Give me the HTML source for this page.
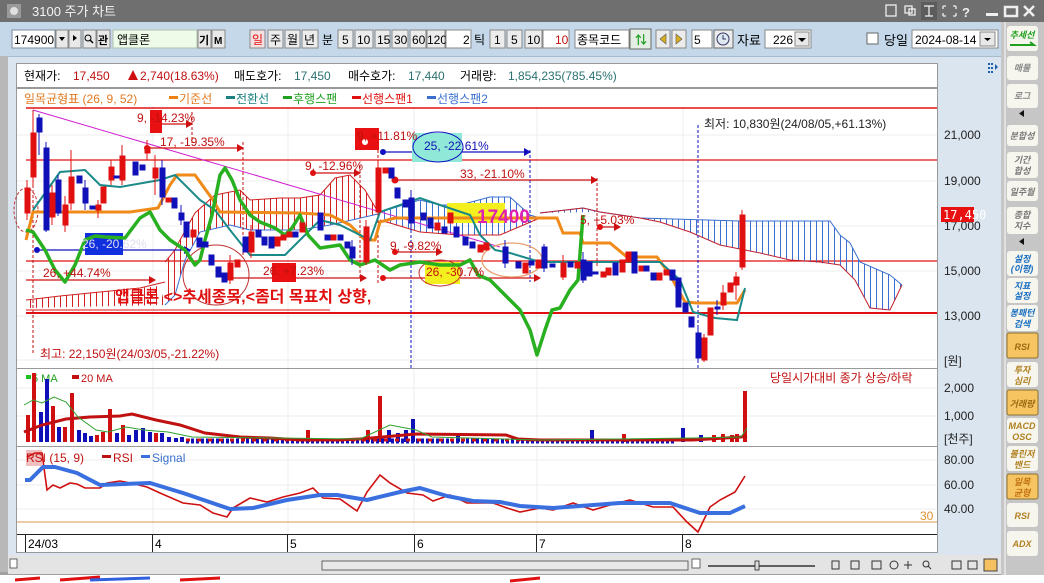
<!DOCTYPE html>
<html><head><meta charset="utf-8">
<style>
html,body{margin:0;padding:0;width:1044px;height:583px;overflow:hidden;background:#fff}
svg{display:block}
text{font-family:"Liberation Sans","Noto Sans CJK KR",sans-serif}
.k{font-family:"Liberation Sans","Noto Sans CJK KR",sans-serif}
.m{font-family:"DejaVu Sans Mono","Liberation Mono","Noto Sans CJK KR",monospace}
</style></head><body>
<svg width="1044" height="583" viewBox="0 0 1044 583" xmlns="http://www.w3.org/2000/svg">
<defs>
<pattern id="hr" patternUnits="userSpaceOnUse" width="6" height="10"><line x1="0.5" y1="0" x2="0.5" y2="10" stroke="#d02020" stroke-width="1"/></pattern>
<pattern id="hb" patternUnits="userSpaceOnUse" width="6" height="10"><line x1="0.5" y1="0" x2="0.5" y2="10" stroke="#3a6fd0" stroke-width="1"/></pattern>
</defs>
<!-- bottom strip -->
<rect x="0" y="574" width="1044" height="9" fill="#fff"/>
<path d="M15 580 L40 578 M60 580 L100 577 M180 580 L220 578 M510 581 L540 578" stroke="#e01010" stroke-width="3"/>
<path d="M90 580 L150 578" stroke="#3060e0" stroke-width="3"/>
<!-- window bg -->
<rect x="0" y="0" width="1044" height="575" fill="#dbe5ef"/>
<rect x="0" y="0" width="8" height="575" fill="#b8b8b8"/>
<rect x="0" y="572" width="1004" height="3" fill="#a0a0a0"/>
<!-- title bar -->
<rect x="0" y="0" width="1044" height="22" fill="#6f6f6f"/>
<rect x="7" y="4" width="14" height="14" fill="#9a9a9a"/><circle cx="14" cy="11" r="4" fill="#e0e0e0"/>
<text x="32" y="16" font-size="13" fill="#f4f4f4">3100 주가 차트</text>
<g fill="none" stroke="#eee" stroke-width="1.3">
<rect x="886" y="5" width="10" height="11"/><rect x="905" y="6" width="7" height="7"/><rect x="909" y="9" width="6" height="6"/>
<rect x="921" y="2" width="16" height="18" fill="#5c5c5c" stroke="none"/>
<path d="M924 6h10M929 6v10M925 16h8M943 6h3M943 6v3M956 6h-3M956 6v3M943 16h3M943 16v-3M956 16h-3M956 16v-3"/>
</g>
<text x="962" y="17" font-size="13" fill="#eee" font-weight="bold">?</text>
<rect x="986" y="13" width="12" height="3" fill="#eee"/>
<rect x="1005" y="7" width="12" height="9" fill="none" stroke="#eee" stroke-width="2.5"/>
<path d="M1024 6l10 10M1034 6l-10 10" stroke="#eee" stroke-width="2.5"/>
<!-- toolbar -->
<rect x="0" y="22" width="1004" height="34" fill="#c4d8e9"/>
<rect x="8" y="56" width="996" height="1" fill="#a9bccd"/>
<g font-size="12" class="k">
<rect x="12" y="30" width="43" height="18" fill="#fff" stroke="#7a8a9a"/><text x="14" y="44">174900</text>
<g fill="#e8e8e8" stroke="#888"><rect x="56" y="30" width="12" height="18"/><rect x="69" y="30" width="12" height="18"/><rect x="83" y="30" width="13" height="18"/><rect x="97" y="30" width="13" height="18"/><rect x="198" y="30" width="13" height="18"/><rect x="212" y="30" width="13" height="18"/></g>
<path d="M59 37h6l-3 4z M73 35v6l4-3z" fill="#000"/>
<circle cx="88" cy="38" r="3" fill="none" stroke="#000"/><path d="M90 40l3 3" stroke="#000" stroke-width="1.5"/>
<text x="98" y="44" font-size="11" font-weight="bold">관</text>
<rect x="113" y="30" width="84" height="18" fill="#eefbe8" stroke="#b0c0b0"/><text x="117" y="44">앱클론</text>
<text x="199" y="44" font-weight="bold" font-size="11">기</text><text x="214" y="44" font-weight="bold" font-size="10">M</text>
<g fill="#ececec" stroke="#888">
<rect x="250" y="30" width="15" height="18" fill="#f4e0e0"/><rect x="268" y="30" width="15" height="18"/><rect x="285" y="30" width="15" height="18"/><rect x="302" y="30" width="16" height="18"/>
<rect x="338" y="30" width="15" height="18"/><rect x="355" y="30" width="18" height="18"/><rect x="375" y="30" width="15" height="18"/><rect x="392" y="30" width="16" height="18"/><rect x="410" y="30" width="16" height="18"/><rect x="427" y="30" width="18" height="18"/>
<rect x="490" y="30" width="15" height="18"/><rect x="507" y="30" width="15" height="18"/><rect x="525" y="30" width="17" height="18"/>
</g>
<text x="252" y="44" fill="#e01010">일</text><text x="270" y="44">주</text><text x="287" y="44">월</text><text x="304" y="44">년</text><text x="322" y="44">분</text>
<text x="342" y="44">5</text><text x="357" y="44">10</text><text x="377" y="44">15</text><text x="394" y="44">30</text><text x="412" y="44">60</text><text x="427" y="44">120</text>
<rect x="446" y="30" width="25" height="18" fill="#fff" stroke="#888"/><text x="463" y="44">2</text><text x="474" y="44">틱</text>
<text x="494" y="44">1</text><text x="511" y="44">5</text><text x="527" y="44">10</text>
<rect x="543" y="30" width="26" height="18" fill="#fff" stroke="#888"/><text x="555" y="44" fill="#c01010">10</text>
<rect x="575" y="30" width="54" height="18" fill="#fff" stroke="#888"/><text x="577" y="44">종목코드</text>
<rect x="630" y="29" width="21" height="20" fill="#e4eee4" stroke="#666"/><text x="635" y="44" fill="#20a020" font-weight="bold">⇅</text>
<rect x="656" y="30" width="14" height="18" fill="#ececec" stroke="#888"/><rect x="672" y="30" width="14" height="18" fill="#ececec" stroke="#888"/>
<path d="M666 34v10l-6-5z M676 34v10l6-5z" fill="#d8b020" stroke="#555" stroke-width="0.6"/>
<rect x="692" y="30" width="20" height="18" fill="#fff" stroke="#888"/><text x="694" y="44">5</text>
<rect x="714" y="30" width="19" height="18" fill="#ececec" stroke="#666"/><circle cx="723" cy="39" r="6" fill="#dde8f0" stroke="#336"/><path d="M723 35v4h3" stroke="#336" fill="none"/>
<text x="737" y="45" font-size="13">자료</text>
<rect x="765" y="30" width="46" height="18" fill="#fff" stroke="#888"/><text x="773" y="44">226</text><rect x="795" y="32" width="14" height="14" fill="#e8e8e8" stroke="#888"/><path d="M798 38h8l-4 4z"/>
<rect x="867" y="33" width="11" height="11" fill="#fff" stroke="#666"/><text x="884" y="45" font-size="13">당일</text>
<rect x="912" y="30" width="86" height="18" fill="#fff" stroke="#888"/><text x="915" y="44">2024-08-14</text><rect x="980" y="32" width="15" height="14" fill="#e8e8e8" stroke="#888"/><path d="M984 38h7l-3.5 3z"/>
</g>
<!-- right sidebar -->
<rect x="1001" y="22" width="43" height="553" fill="#c6c6c6"/>
<rect x="1004" y="22" width="2" height="553" fill="#e0e0e0"/>
<g font-size="9" font-style="italic" font-weight="bold" text-anchor="middle" class="k">
<rect x="1007" y="26" width="31" height="25" rx="3" fill="#f7f6ee"/><text x="1022" y="38" fill="#20a020">추세선</text><path d="M1010 45h24l-4 -3" stroke="#20a020" stroke-width="2" fill="none"/>
<rect x="1007" y="56" width="31" height="24" rx="3" fill="#f7f6ee"/><text x="1022" y="71" fill="#888">매물</text>
<rect x="1007" y="84" width="31" height="24" rx="3" fill="#f7f6ee"/><text x="1022" y="99" fill="#888">로그</text>
<path d="M1024 110v7l-5-3.5z" fill="#111"/>
<rect x="1007" y="125" width="31" height="21" rx="3" fill="#f7f6ee"/><text x="1022" y="139" fill="#777">분합성</text>
<rect x="1007" y="152" width="31" height="26" rx="3" fill="#f7f6ee"/><text x="1022" y="163" fill="#777">기간</text><text x="1022" y="174" fill="#777">합성</text>
<rect x="1007" y="181" width="31" height="20" rx="3" fill="#f7f6ee"/><text x="1022" y="195" fill="#777">일주월</text>
<rect x="1007" y="207" width="31" height="27" rx="3" fill="#f7f6ee"/><text x="1022" y="218" fill="#777">종합</text><text x="1022" y="229" fill="#777">지수</text>
<path d="M1024 238v7l-5-3.5z" fill="#111"/>
<rect x="1007" y="251" width="31" height="25" rx="3" fill="#f7f6ee"/><text x="1022" y="262" fill="#1a6fc0">설정</text><text x="1022" y="272" fill="#1a6fc0">(이평)</text>
<rect x="1007" y="278" width="31" height="25" rx="3" fill="#f7f6ee"/><text x="1022" y="289" fill="#1a6fc0">지표</text><text x="1022" y="299" fill="#1a6fc0">설정</text>
<rect x="1007" y="305" width="31" height="26" rx="3" fill="#f7f6ee"/><text x="1022" y="316" fill="#1a6fc0">봉패턴</text><text x="1022" y="327" fill="#1a6fc0">검색</text>
<rect x="1007" y="333" width="31" height="25" rx="2" fill="#f7c462" stroke="#8a7030"/><text x="1022" y="350" fill="#9a6a10">RSI</text>
<rect x="1007" y="362" width="31" height="25" rx="3" fill="#f7f6ee"/><text x="1022" y="373" fill="#b08020">투자</text><text x="1022" y="384" fill="#b08020">심리</text>
<rect x="1007" y="390" width="31" height="25" rx="2" fill="#f7c462" stroke="#8a7030"/><text x="1022" y="407" fill="#9a6a10">거래량</text>
<rect x="1007" y="418" width="31" height="25" rx="3" fill="#f7f6ee"/><text x="1022" y="429" fill="#b08020">MACD</text><text x="1022" y="440" fill="#b08020">OSC</text>
<rect x="1007" y="446" width="31" height="25" rx="3" fill="#f7f6ee"/><text x="1022" y="457" fill="#b08020">볼린저</text><text x="1022" y="468" fill="#b08020">밴드</text>
<rect x="1007" y="474" width="31" height="25" rx="2" fill="#f7c462" stroke="#8a7030"/><text x="1022" y="485" fill="#c07010">일목</text><text x="1022" y="496" fill="#c07010">균형</text>
<rect x="1007" y="503" width="31" height="24" rx="3" fill="#f7f6ee"/><text x="1022" y="519" fill="#b08020">RSI</text>
<rect x="1007" y="531" width="31" height="25" rx="3" fill="#f7f6ee"/><text x="1022" y="547" fill="#b08020">ADX</text>
</g>
<!-- info row -->
<rect x="16.5" y="63.5" width="921" height="24" fill="#fff" stroke="#999"/>
<g font-size="12" class="m">
<text x="24" y="80">현재가:</text><text x="73" y="80" fill="#c01010">17,450</text>
<path d="M128 80l5-10 5 10z" fill="#d01010"/><text x="140" y="80" fill="#c01010">2,740(18.63%)</text>
<text x="234" y="80">매도호가:</text><text x="294" y="80" fill="#2a7070">17,450</text>
<text x="348" y="80">매수호가:</text><text x="408" y="80" fill="#2a7070">17,440</text>
<text x="460" y="80">거래량:</text><text x="508" y="80" fill="#2a7070">1,854,235(785.45%)</text>
</g>
<g fill="#1a5fb0"><rect x="988" y="63" width="2" height="2"/><rect x="988" y="67" width="2" height="2"/><rect x="988" y="71" width="2" height="2"/><rect x="991" y="63" width="2" height="2"/><rect x="991" y="67" width="2" height="2"/><rect x="991" y="71" width="2" height="2"/><path d="M995 64v6l3-3z"/></g>
<!-- chart panel -->
<rect x="16.5" y="88.5" width="921" height="464" fill="#fff" stroke="#999"/>
<!-- grids -->
<g stroke="#ececec" stroke-width="1">
<path d="M153 106V534M288 106V534M414 106V534M537 106V534M683 106V534"/>
<path d="M17 135H937M17 181H937M17 226H937M17 271H937M17 316H937M17 360H937M17 388H937M17 416H937M17 460H937M17 485H937M17 509H937"/>
</g>
<line x1="17" y1="368.5" x2="937" y2="368.5" stroke="#999"/>
<line x1="17" y1="446.5" x2="937" y2="446.5" stroke="#999"/>
<!-- legend -->
<g font-size="12" class="m">
<text x="24" y="103" fill="#e07820">일목균형표 (26, 9, 52)</text>
<rect x="169" y="96" width="9" height="3" fill="#f08010"/><text x="179" y="103" fill="#e07820">기준선</text>
<rect x="226" y="96" width="9" height="3" fill="#1a8080"/><text x="236" y="103" fill="#1a8080">전환선</text>
<rect x="283" y="96" width="9" height="3" fill="#20a020"/><text x="293" y="103" fill="#20a020">후행스팬</text>
<rect x="352" y="96" width="9" height="3" fill="#e01010"/><text x="362" y="103" fill="#e01010">선행스팬1</text>
<rect x="427" y="96" width="9" height="3" fill="#3a6fd0"/><text x="437" y="103" fill="#3a6fd0">선행스팬2</text>
</g>
<!-- horizontal red lines -->
<g stroke="#e01010">
<line x1="26" y1="108" x2="937" y2="108" stroke-width="1.5"/>
<line x1="26" y1="160" x2="937" y2="160" stroke-width="1.2"/>
<line x1="26" y1="261" x2="937" y2="261" stroke-width="1.2"/>
<line x1="26" y1="313" x2="937" y2="313" stroke-width="2"/>
<line x1="26" y1="310" x2="330" y2="310" stroke-width="1"/>
</g>
<!-- clouds -->
<polygon points="165,262 175,250 180,240 195,213 215,195 240,190 250,200 280,198 300,198 320,195 335,178 350,175 365,190 378,212 375,215 330,225 300,230 250,230 230,225 200,232 185,260 175,295 165,305" fill="url(#hr)"/>
<polyline points="165,262 175,250 180,240 195,213 215,195 240,190 250,200 280,198 300,198 320,195 335,178 350,175 365,190 378,212" fill="none" stroke="#d02020"/>
<polyline points="165,305 175,295 185,260 200,232 230,225 250,230 300,230 330,225 378,214" fill="none" stroke="#3a6fd0"/>
<polygon points="26,300 60,296 100,292 140,288 160,286 165,305 26,308" fill="url(#hr)"/>
<polyline points="26,300 60,296 100,292 140,288 165,282" fill="none" stroke="#d02020"/>
<polygon points="380,212 420,200 440,205 460,205 490,197 510,197 530,215 540,218 500,235 460,235 420,232 380,220" fill="url(#hb)"/>
<polyline points="380,212 420,200 440,205 460,205 490,197 510,197 530,215 540,218" fill="none" stroke="#3a6fd0"/>
<polyline points="380,220 420,232 460,235 500,235 540,218" fill="none" stroke="#d02020"/>
<polygon points="540,213 583,208 600,212 640,218 740,221 830,221 840,235 850,243 860,262 890,275 902,285 890,310 870,308 855,280 840,265 790,260 760,253 720,245 690,232 660,222 640,218 600,212" fill="url(#hb)"/>
<polyline points="540,213 583,208 600,212 640,218 740,221 830,221 840,235 850,243 860,262 890,275 902,285" fill="none" stroke="#3a6fd0"/>
<polyline points="540,213 583,208 600,212 640,218 660,222 690,232 720,245 760,253 790,260 820,262 840,265 855,280 870,308 890,310 902,285" fill="none" stroke="#c02030"/>
<!-- trend line -->
<line x1="33" y1="110" x2="500" y2="247" stroke="#d020d0"/>
<!-- dashed verticals -->
<g stroke-dasharray="3,2" fill="none">
<line x1="33" y1="110" x2="33" y2="355" stroke="#c01010"/>
<line x1="192" y1="112" x2="192" y2="143" stroke="#c01010"/>
<line x1="243" y1="142" x2="243" y2="255" stroke="#c01010"/>
<line x1="360" y1="165" x2="360" y2="280" stroke="#c01010"/>
<line x1="378" y1="140" x2="378" y2="285" stroke="#c01010"/>
<line x1="411" y1="200" x2="411" y2="368" stroke="#1010c0"/>
<line x1="530" y1="150" x2="530" y2="282" stroke="#1010c0"/>
<line x1="597" y1="178" x2="597" y2="268" stroke="#c01010"/>
<line x1="698" y1="125" x2="698" y2="368" stroke="#1010c0"/>
</g>
<!-- annotation lines -->
<g stroke-width="1.2">
<line x1="147" y1="148" x2="243" y2="148" stroke="#d01010"/><path d="M237 144l7 4-7 4z" fill="#d01010"/><circle cx="147" cy="148" r="3" fill="#e01010"/>
<line x1="150" y1="124" x2="192" y2="124" stroke="#d01010"/><path d="M186 120l7 4-7 4z" fill="#d01010"/>
<line x1="313" y1="173" x2="360" y2="173" stroke="#d01010"/><circle cx="313" cy="173" r="3" fill="#e01010"/><path d="M354 169l7 4-7 4z" fill="#d01010"/>
<line x1="383" y1="152" x2="530" y2="152" stroke="#1010c0"/><circle cx="383" cy="152" r="3" fill="#1010c0"/><path d="M524 148l7 4-7 4z" fill="#1010c0"/>
<line x1="395" y1="180" x2="597" y2="180" stroke="#d01010"/><circle cx="395" cy="180" r="3.5" fill="#e01010"/><path d="M591 176l7 4-7 4z" fill="#d01010"/>
<line x1="36" y1="250" x2="190" y2="250" stroke="#1010c0"/><circle cx="37" cy="250" r="3" fill="#1010c0"/><path d="M184 246l7 4-7 4z" fill="#1010c0"/>
<line x1="26" y1="280" x2="155" y2="280" stroke="#d01010"/><path d="M149 276l7 4-7 4z" fill="#d01010"/>
<line x1="230" y1="278" x2="366" y2="278" stroke="#d01010"/><path d="M360 274l7 4-7 4z" fill="#d01010"/>
<line x1="395" y1="252" x2="442" y2="252" stroke="#d01010"/><circle cx="395" cy="252" r="3" fill="#e01010"/><path d="M436 248l7 4-7 4z" fill="#d01010"/>
<line x1="383" y1="278" x2="540" y2="278" stroke="#d01010"/><circle cx="383" cy="278" r="3" fill="#e01010"/><path d="M534 274l7 4-7 4z" fill="#d01010"/>
<line x1="600" y1="227" x2="620" y2="227" stroke="#d01010"/><circle cx="600" cy="227" r="3" fill="#e01010"/><path d="M614 223l7 4-7 4z" fill="#d01010"/>
</g>
<!-- boxes & ellipses -->
<rect x="150" y="110" width="12" height="23" fill="#e81010"/>
<rect x="355" y="128" width="24" height="22" fill="#e81010"/><circle cx="365" cy="142" r="3" fill="#fff"/>
<rect x="412" y="133" width="50" height="29" fill="#90e8d8"/><ellipse cx="438" cy="147" rx="25" ry="15" fill="none" stroke="#1010c0"/>
<rect x="85" y="233" width="38" height="22" fill="#1030e0"/>
<rect x="272" y="263" width="24" height="19" fill="#e81010"/>
<rect x="447" y="203" width="58" height="20" fill="#f4f020"/>
<rect x="425" y="262" width="35" height="22" fill="#f4f020"/>
<ellipse cx="440" cy="273" rx="21" ry="13" fill="none" stroke="#c03030"/>
<ellipse cx="512" cy="260" rx="30" ry="17" fill="none" stroke="#e8a070" stroke-width="1.3"/>
<ellipse cx="216" cy="275" rx="33" ry="30" fill="none" stroke="#c03030"/>
<ellipse cx="26" cy="210" rx="12" ry="22" fill="none" stroke="#c03030" stroke-dasharray="3,2"/>
<!-- ichimoku lines -->
<polyline points="26,240 33,212 130,212 158,208 170,185 177,175 195,175 213,200 220,212 300,213 330,215 350,225 365,240 375,240 380,222 395,218 470,218 537,218 557,218 563,233 580,233 583,243 610,243 627,257 657,257 670,275 685,302 697,303 737,303 745,290" fill="none" stroke="#f08a18" stroke-width="3"/>
<polyline points="33,210 60,172 85,170 100,185 120,187 160,180 175,175 200,200 215,210 230,230 250,255 285,255 300,240 320,220 340,225 370,240 380,212 420,198 440,205 470,215 480,235 495,250 510,253 540,262 660,262 680,280 693,312 715,318 737,320 745,288" fill="none" stroke="#1a8a88" stroke-width="2"/>
<polyline points="26,230 33,232 45,250 55,270 65,282 75,265 85,240 95,236 105,237 125,238 140,218 150,212 160,230 170,240 185,250 195,265 200,260 205,240 212,215 220,175 225,168 232,180 240,200 250,215 260,222 275,228 285,235 292,228 300,215 308,235 320,248 340,245 350,260 360,265 375,260 390,270 400,265 420,262 440,265 460,265 470,260 478,275 490,280 505,295 520,310 530,330 537,355 545,330 552,310 560,308 570,290 578,280 583,215" fill="none" stroke="#28b020" stroke-width="3.5" stroke-linejoin="round"/>
<!-- candles -->
<g id="c"></g>
<g stroke-width="1">
<!-- red candles -->
<g fill="#e01010" stroke="#e01010">
<line x1="27" y1="180" x2="27" y2="220"/><rect x="25" y="188" width="5" height="25"/>
<line x1="33" y1="112" x2="33" y2="185"/><rect x="31" y="133" width="5" height="44"/>
<rect x="50" y="193" width="5" height="24"/><line x1="52" y1="185" x2="52" y2="225"/>
<rect x="63" y="205" width="5" height="20"/><line x1="65" y1="196" x2="65" y2="232"/>
<rect x="69" y="177" width="5" height="26"/><line x1="71" y1="150" x2="71" y2="210"/>
<rect x="96" y="205" width="5" height="5"/><line x1="98" y1="200" x2="98" y2="218"/>
<rect x="101" y="187" width="5" height="16"/>
<rect x="109" y="167" width="5" height="13"/><line x1="111" y1="160" x2="111" y2="185"/>
<rect x="120" y="156" width="5" height="24"/><line x1="122" y1="145" x2="122" y2="185"/>
<rect x="145" y="147" width="5" height="6"/><line x1="147" y1="140" x2="147" y2="160"/>
<rect x="153" y="168" width="5" height="10"/><line x1="155" y1="155" x2="155" y2="195"/>
<rect x="166" y="198" width="5" height="4"/>
<rect x="191" y="230" width="5" height="7"/>
<rect x="228" y="263" width="5" height="17"/><line x1="230" y1="255" x2="230" y2="284"/>
<rect x="235" y="260" width="5" height="7"/>
<rect x="249" y="232" width="5" height="20"/><line x1="251" y1="225" x2="251" y2="258"/>
<rect x="275" y="237" width="5" height="9"/><rect x="281" y="235" width="5" height="5"/><rect x="287" y="232" width="5" height="5"/>
<rect x="300" y="223" width="5" height="9"/>
<rect x="331" y="235" width="5" height="5"/>
<rect x="364" y="227" width="5" height="35"/><line x1="366" y1="220" x2="366" y2="265"/>
<rect x="376" y="168" width="5" height="44"/><line x1="378" y1="160" x2="378" y2="215"/>
<rect x="383" y="168" width="5" height="5"/>
<rect x="435" y="223" width="5" height="7"/><rect x="448" y="213" width="5" height="10"/>
<rect x="478" y="245" width="5" height="7"/><rect x="484" y="243" width="5" height="7"/>
<rect x="523" y="263" width="5" height="10"/><rect x="536" y="260" width="5" height="8"/>
<rect x="561" y="263" width="5" height="14"/><line x1="563" y1="255" x2="563" y2="280"/>
<rect x="575" y="262" width="5" height="6"/>
<rect x="601" y="272" width="5" height="5"/><rect x="606" y="268" width="5" height="7"/>
<rect x="620" y="260" width="5" height="12"/><rect x="626" y="252" width="5" height="10"/>
<rect x="639" y="266" width="5" height="5"/><rect x="657" y="273" width="5" height="7"/><rect x="664" y="270" width="5" height="5"/>
<rect x="702" y="338" width="5" height="22"/><line x1="704" y1="334" x2="704" y2="362"/>
<rect x="708" y="308" width="5" height="27"/>
<rect x="721" y="293" width="5" height="12"/><line x1="723" y1="285" x2="723" y2="310"/>
<rect x="728" y="283" width="5" height="9"/><rect x="734" y="277" width="5" height="8"/><line x1="736" y1="272" x2="736" y2="300"/>
<rect x="740" y="215" width="5" height="52"/><line x1="742" y1="210" x2="742" y2="270"/>
</g>
<!-- blue candles -->
<g fill="#1010b8" stroke="#1010b8">
<rect x="37" y="118" width="5" height="14"/><line x1="39" y1="114" x2="39" y2="155"/>
<rect x="44" y="148" width="5" height="82"/><line x1="46" y1="142" x2="46" y2="232"/>
<rect x="56" y="180" width="5" height="33"/><line x1="58" y1="175" x2="58" y2="216"/>
<rect x="77" y="176" width="5" height="7"/><rect x="83" y="188" width="5" height="15"/><line x1="85" y1="180" x2="85" y2="210"/>
<rect x="90" y="206" width="5" height="3"/><rect x="114" y="176" width="5" height="2"/>
<rect x="133" y="162" width="5" height="13"/><rect x="140" y="165" width="5" height="5"/>
<rect x="160" y="168" width="5" height="29"/><line x1="162" y1="160" x2="162" y2="205"/>
<rect x="172" y="198" width="5" height="10"/><rect x="179" y="213" width="5" height="7"/><line x1="181" y1="205" x2="181" y2="225"/>
<rect x="184" y="222" width="5" height="15"/><rect x="197" y="238" width="5" height="9"/><rect x="203" y="242" width="5" height="5"/>
<rect x="209" y="255" width="5" height="10"/><rect x="216" y="267" width="5" height="10"/><rect x="222" y="273" width="5" height="9"/>
<rect x="243" y="237" width="5" height="15"/><rect x="256" y="230" width="5" height="7"/><rect x="262" y="237" width="5" height="8"/><rect x="269" y="237" width="5" height="11"/>
<rect x="293" y="232" width="5" height="5"/><rect x="318" y="213" width="5" height="17"/><rect x="325" y="235" width="5" height="5"/><rect x="338" y="235" width="5" height="5"/>
<rect x="345" y="242" width="5" height="6"/><rect x="350" y="247" width="5" height="11"/><line x1="352" y1="240" x2="352" y2="265"/>
<rect x="389" y="168" width="5" height="10"/><rect x="395" y="188" width="5" height="10"/><rect x="403" y="200" width="5" height="7"/><rect x="409" y="198" width="5" height="25"/><line x1="411" y1="190" x2="411" y2="230"/>
<rect x="421" y="213" width="5" height="7"/><rect x="428" y="218" width="5" height="10"/><rect x="442" y="227" width="5" height="6"/><rect x="454" y="227" width="5" height="10"/>
<rect x="463" y="237" width="5" height="8"/><rect x="470" y="242" width="5" height="6"/>
<rect x="503" y="247" width="5" height="16"/><line x1="505" y1="240" x2="505" y2="268"/>
<rect x="516" y="262" width="5" height="6"/><rect x="529" y="261" width="5" height="4"/><rect x="542" y="247" width="5" height="21"/><line x1="544" y1="244" x2="544" y2="272"/>
<rect x="550" y="264" width="5" height="3"/><rect x="568" y="262" width="5" height="5"/>
<rect x="581" y="260" width="5" height="20"/><line x1="583" y1="252" x2="583" y2="283"/>
<rect x="587" y="262" width="5" height="14"/><rect x="593" y="272" width="5" height="2"/>
<rect x="613" y="263" width="5" height="12"/><rect x="632" y="252" width="5" height="21"/><rect x="644" y="266" width="5" height="5"/>
<rect x="651" y="273" width="5" height="7"/><rect x="670" y="270" width="5" height="10"/>
<rect x="676" y="278" width="5" height="29"/><rect x="683" y="303" width="5" height="9"/><rect x="689" y="317" width="5" height="10"/>
<rect x="696" y="333" width="5" height="25"/><line x1="698" y1="328" x2="698" y2="362"/>
<rect x="715" y="307" width="5" height="2"/><line x1="717" y1="300" x2="717" y2="315"/>
</g>
</g>
<!-- annotation texts -->
<g font-size="12" class="m" fill="#c01010">
<text x="137" y="122">9, -14.23%</text>
<text x="160" y="146">17, -19.35%</text>
<text x="305" y="170">9, -12.96%</text>
<text x="357" y="140">9, +11.81%</text>
<text x="424" y="150" fill="#1010b0">25, -22.61%</text>
<text x="460" y="178">33, -21.10%</text>
<text x="82" y="248" fill="#dde">26, -20.62%</text>
<text x="43" y="277">26, +44.74%</text>
<text x="263" y="275">26, +7.23%</text>
<text x="390" y="250">9, -9.82%</text>
<text x="426" y="276">26, -30.7%</text>
<text x="580" y="224">5, +5.03%</text>
<text x="40" y="358">최고: 22,150원(24/03/05,-21.22%)</text>
<text x="704" y="128" fill="#222">최저: 10,830원(24/08/05,+61.13%)</text>
</g>
<text x="477" y="223" font-size="19" font-weight="bold" fill="#e020b0" class="k">17400</text>
<text x="115" y="302" font-size="16" font-weight="bold" fill="#e01010" class="k">앱클론 &lt;&gt;추세종목,&lt;좀더 목표치 상향,</text>
<!-- volume panel -->
<g font-size="11" class="m">
<rect x="26" y="375" width="5" height="4" fill="#20c020"/><text x="32" y="382" fill="#20a020">5 MA</text>
<rect x="72" y="375" width="7" height="4" fill="#c01010"/><text x="81" y="382" fill="#c01010">20 MA</text>
<text x="770" y="382" fill="#c01010" font-size="12">당일시가대비 종가 상승/하락</text>
</g>
<g>
<rect x="26" y="415" width="4" height="27" fill="#d01010"/><rect x="32" y="373" width="4" height="69" fill="#d01010"/>
<rect x="39" y="412" width="4" height="30" fill="#1010b8"/><rect x="45" y="379" width="4" height="63" fill="#1010b8"/>
<rect x="51" y="406" width="4" height="36" fill="#d01010"/><rect x="57" y="427" width="4" height="15" fill="#1010b8"/><rect x="63" y="427" width="4" height="15" fill="#d01010"/>
<rect x="70" y="393" width="4" height="49" fill="#d01010"/><rect x="77" y="430" width="4" height="12" fill="#1010b8"/><rect x="83" y="433" width="4" height="9" fill="#1010b8"/>
<rect x="89" y="436" width="4" height="6" fill="#1010b8"/><rect x="95" y="435" width="4" height="7" fill="#d01010"/><rect x="101" y="432" width="4" height="10" fill="#d01010"/>
<rect x="108" y="409" width="4" height="33" fill="#d01010"/><rect x="115" y="433" width="4" height="9" fill="#1010b8"/><rect x="121" y="425" width="4" height="17" fill="#d01010"/>
<rect x="127" y="435" width="4" height="7" fill="#1010b8"/><rect x="134" y="430" width="4" height="12" fill="#1010b8"/><rect x="141" y="428" width="4" height="14" fill="#1010b8"/>
<rect x="148" y="432" width="4" height="10" fill="#1010b8"/><rect x="154" y="433" width="4" height="9" fill="#d01010"/><rect x="160" y="433" width="4" height="9" fill="#1010b8"/>
<rect x="167" y="437" width="4" height="5" fill="#1010b8"/><rect x="174" y="438" width="4" height="4" fill="#1010b8"/><rect x="180" y="437" width="4" height="5" fill="#1010b8"/>
<rect x="306" y="430" width="4" height="12" fill="#d01010"/><rect x="366" y="430" width="4" height="12" fill="#d01010"/><rect x="378" y="396" width="4" height="46" fill="#d01010"/>
<rect x="387" y="430" width="4" height="12" fill="#1010b8"/><rect x="396" y="433" width="4" height="9" fill="#1010b8"/><rect x="404" y="430" width="4" height="12" fill="#1010b8"/><rect x="411" y="419" width="4" height="23" fill="#1010b8"/>
<rect x="456" y="434" width="4" height="8" fill="#1010b8"/><rect x="590" y="430" width="4" height="12" fill="#1010b8"/><rect x="622" y="434" width="4" height="8" fill="#d01010"/>
<rect x="681" y="428" width="4" height="14" fill="#1010b8"/><rect x="699" y="435" width="4" height="7" fill="#1010b8"/><rect x="712" y="435" width="4" height="7" fill="#d01010"/>
<rect x="721" y="434" width="4" height="8" fill="#d01010"/><rect x="730" y="435" width="4" height="7" fill="#d01010"/><rect x="735" y="434" width="4" height="8" fill="#d01010"/>
<rect x="743" y="391" width="4" height="51" fill="#d01010"/>
<path d="M186 442h490M186 440h490" stroke-dasharray="3,2" stroke="#1010b8" stroke-width="3"/>
<path d="M186 440h490" stroke-dasharray="4,7" stroke="#d01010" stroke-width="3"/>
</g>
<polyline points="24,432 42,425 66,419 90,417 120,416 132,414 156,420 180,425 205,433 240,437 270,438 300,440 338,440 360,439 416,434 506,435 518,439 540,440 693,440 741,437 747,436" fill="none" stroke="#c01010" stroke-width="3"/>
<polyline points="24,405 33,400 42,403 54,397 66,402 78,417 96,430 108,432 126,427 144,430 168,432 192,437 360,439 390,425 416,430 432,437 540,440 693,438 741,437 747,428" fill="none" stroke="#30a030" stroke-width="1"/>
<!-- RSI panel -->
<rect x="26" y="450" width="16" height="16" fill="#f0c0c0"/>
<g font-size="12" class="m">
<text x="26" y="462" fill="#c01010">RSI (15, 9)</text>
<rect x="102" y="455" width="9" height="3" fill="#c01010"/><text x="113" y="462" fill="#c01010">RSI</text>
<rect x="141" y="455" width="9" height="3" fill="#3a6fe0"/><text x="152" y="462" fill="#3a6fd0">Signal</text>
<text x="920" y="520" fill="#e09030">30</text>
</g>
<line x1="17" y1="522" x2="937" y2="522" stroke="#d89850"/>
<polyline points="27,457 35,453 42,453 47,490 53,485 60,488 70,483 77,484 85,488 100,488 107,483 120,481 130,483 147,487 160,493 183,503 200,505 213,513 227,517 233,508 250,498 267,502 283,497 300,493 313,488 323,498 340,499 357,511 367,492 380,475 390,483 407,493 423,495 433,501 450,495 467,503 493,503 507,508 520,512 540,508 553,510 573,503 593,510 610,505 630,500 653,507 673,507 687,522 698,532 710,507 720,500 735,492 745,476" fill="none" stroke="#d01010" stroke-width="1.6"/>
<polyline points="25,480 30,480 43,467 55,467 77,473 100,485 150,483 183,493 230,509 253,508 287,500 320,495 337,495 367,500 400,492 420,488 447,496 473,501 500,502 520,506 553,508 620,503 670,503 700,513 730,513 745,506" fill="none" stroke="#3a6fe0" stroke-width="4" stroke-linejoin="round"/>
<!-- date axis -->
<line x1="17" y1="534.5" x2="937" y2="534.5" stroke="#222"/>
<g stroke="#222"><line x1="25.5" y1="534" x2="25.5" y2="552"/><line x1="152.5" y1="534" x2="152.5" y2="552"/><line x1="287.5" y1="534" x2="287.5" y2="552"/><line x1="414.5" y1="534" x2="414.5" y2="552"/><line x1="536.5" y1="534" x2="536.5" y2="552"/><line x1="682.5" y1="534" x2="682.5" y2="552"/></g>
<g font-size="12" class="k"><text x="28" y="548">24/03</text><text x="155" y="548">4</text><text x="290" y="548">5</text><text x="417" y="548">6</text><text x="539" y="548">7</text><text x="685" y="548">8</text></g>
<!-- y axis labels -->
<g font-size="12" class="m" fill="#222">
<text x="944" y="139">21,000</text><text x="944" y="185">19,000</text><text x="944" y="230">17,000</text><text x="944" y="275">15,000</text><text x="944" y="320">13,000</text>
<text x="944" y="365">[원]</text><text x="944" y="392">2,000</text><text x="944" y="420">1,000</text><text x="944" y="443">[천주]</text>
<text x="944" y="464">80.00</text><text x="944" y="489">60.00</text><text x="944" y="513">40.00</text>
</g>
<rect x="941" y="207" width="33" height="15" fill="#e81010"/><text x="943" y="219" font-size="12" fill="#fff" class="m">17,450</text>
<!-- scrollbar -->
<rect x="8" y="555" width="993" height="19" fill="#e4e4e4"/>
<rect x="10" y="559" width="7" height="9" fill="#fff" stroke="#444" stroke-width="0.8"/>
<rect x="322" y="561" width="366" height="9" fill="#e8e8e8" stroke="#444" stroke-width="0.8"/>
<rect x="692" y="559" width="8" height="9" fill="#fff" stroke="#444" stroke-width="0.8"/>
<line x1="708" y1="566" x2="815" y2="566" stroke="#111" stroke-width="1.2"/><rect x="755" y="561" width="4" height="9" fill="#ddd" stroke="#222" stroke-width="0.8"/>
<g fill="none" stroke="#333" stroke-width="1">
<rect x="832" y="561" width="7" height="8"/><rect x="851" y="561" width="8" height="8"/><rect x="872" y="561" width="9" height="8"/>
<circle cx="894" cy="565" r="4"/><path d="M908 561v8M904 565h8"/><circle cx="926" cy="564" r="3"/><path d="M928 566l3 3"/>
<rect x="952" y="561" width="9" height="8"/><rect x="968" y="561" width="9" height="8"/>
</g>
<rect x="984" y="559" width="13" height="12" fill="#f4c060" stroke="#444"/>
</svg>
</body></html>
